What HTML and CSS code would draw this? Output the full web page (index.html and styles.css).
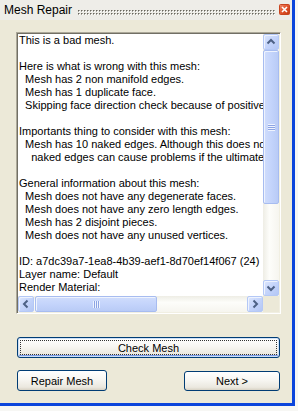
FILE: index.html
```html
<!DOCTYPE html>
<html lang="en">
<head>
    <meta charset="UTF-8">
    <title>Mesh Repair</title>
    <link rel="stylesheet" href="styles.css">
</head>
<body>
<div class="win">
    <div class="title">
        <span class="title-text">Mesh Repair</span>
        <svg class="grip" height="6">
            <defs>
                <pattern id="dots" width="3" height="3" patternUnits="userSpaceOnUse">
                    <rect x="0" y="0" width="2" height="2" fill="#a9a79e"/>
                    <rect x="0" y="0" width="1" height="1" fill="#66645d"/>
                    <rect x="1" y="1" width="1" height="1" fill="#ffffff"/>
                </pattern>
            </defs>
            <rect width="100%" height="6" fill="url(#dots)"/>
        </svg>
        <span class="close">
            <svg width="11" height="11" viewBox="0 0 11 11">
                <defs>
                    <linearGradient id="red" x1="0" y1="0" x2="1" y2="1">
                        <stop offset="0" stop-color="#f08c6c"/>
                        <stop offset="0.5" stop-color="#e0532c"/>
                        <stop offset="1" stop-color="#c23812"/>
                    </linearGradient>
                </defs>
                <rect x="0.5" y="0.5" width="10" height="10" rx="1" fill="url(#red)" stroke="#c8441f"/>
                <path d="M3 3 L8 8 M8 3 L3 8" stroke="#fff" stroke-width="1.6"/>
            </svg>
        </span>
    </div><!--title end-->

    <div class="content">
        <div class="textbox">
            <div class="text">This is a bad mesh.

Here is what is wrong with this mesh:
  Mesh has 2 non manifold edges.
  Mesh has 1 duplicate face.
  Skipping face direction check because of positive or negative volume errors.

Importants thing to consider with this mesh:
  Mesh has 10 naked edges. Although this does not
    naked edges can cause problems if the ultimate goal is to output the mesh.

General information about this mesh:
  Mesh does not have any degenerate faces.
  Mesh does not have any zero length edges.
  Mesh has 2 disjoint pieces.
  Mesh does not have any unused vertices.

ID: a7dc39a7-1ea8-4b39-aef1-8d70ef14f067 (24)
Layer name: Default
Render Material:
    source = from layer</div>

            <div class="vscroll">
                <span class="sb-btn">
                    <svg width="14" height="14" viewBox="0 0 14 14"><path d="M3.5 8.5 L7 5 L10.5 8.5" fill="none" stroke="#4d6185" stroke-width="2"/></svg>
                </span>
                <span class="v-thumb"><i class="grip-v"></i></span>
                <span class="v-track"></span>
                <span class="sb-btn">
                    <svg width="14" height="14" viewBox="0 0 14 14"><path d="M3.5 5.5 L7 9 L10.5 5.5" fill="none" stroke="#4d6185" stroke-width="2"/></svg>
                </span>
            </div>

            <div class="hscroll">
                <span class="sb-btn">
                    <svg width="14" height="14" viewBox="0 0 14 14"><path d="M8.5 3.5 L5 7 L8.5 10.5" fill="none" stroke="#4d6185" stroke-width="2"/></svg>
                </span>
                <span class="h-thumb"><i class="grip-h"></i></span>
                <span class="h-track"></span>
                <span class="sb-btn">
                    <svg width="14" height="14" viewBox="0 0 14 14"><path d="M5.5 3.5 L9 7 L5.5 10.5" fill="none" stroke="#4d6185" stroke-width="2"/></svg>
                </span>
            </div>

            <div class="corner"></div>
        </div><!--textbox end-->

        <button class="btn btn-default">Check Mesh</button>

        <div class="row">
            <button class="btn repair">Repair Mesh</button>
            <button class="btn next">Next &gt;</button>
        </div>
    </div><!--content end-->
</div><!--win end-->
</body>
</html>
```

FILE: styles.css
```css
*{
    margin: 0;
    padding: 0;
    box-sizing: border-box;
}
body{
    background-color: #f7f7f4;
    font-family: "Liberation Sans", Arial, sans-serif;
    font-size: 11px;
    color: #000;
}
.win{
    width: 295px;
    height: 406px;
    background-color: #ece9d8;
    border-right: 3px solid #0b45dc;
    border-bottom: 3px solid #0b45dc;
}

/* title bar */
.title{
    display: flex;
    align-items: center;
    height: 20px;
    padding: 0 2px 0 4px;
    background-color: #eeede8;
}
.title-text{
    font-size: 12px;
    line-height: 20px;
    white-space: nowrap;
}
.grip{
    flex: 1;
    margin: 6px 3px 0 6px;
}
.close{
    width: 11px;
    height: 11px;
    display: block;
    margin-top: -1px;
}
.close svg{
    display: block;
}

.content{
    padding: 12px 11px 0 16px;
}

/* sunken text box */
.textbox{
    width: 265px;
    height: 282px;
    display: grid;
    grid-template-columns: 1fr 16px;
    grid-template-rows: 1fr 16px;
    background-color: #fff;
    border: 1px solid;
    border-color: #aca899 #fff #fff #aca899;
    box-shadow: inset 1px 1px 0 #716f64, inset -1px -1px 0 #f1efe2;
    padding: 1px;
}
.text{
    overflow: hidden;
    white-space: pre;
    line-height: 13px;
    padding: 0 0 0 1px;
}

/* scroll bars */
.vscroll{
    display: flex;
    flex-direction: column;
    background: linear-gradient(to right, #eeede5, #fdfdfa 40%, #f6f5ef);
}
.hscroll{
    display: flex;
    background: linear-gradient(to bottom, #eeede5, #fdfdfa 40%, #f6f5ef);
}
.corner{
    background-color: #ece9d8;
}
.sb-btn{
    width: 16px;
    height: 16px;
    flex: none;
    display: flex;
    align-items: center;
    justify-content: center;
    border: 1px solid #b4c8f6;
    border-radius: 2px;
    background: linear-gradient(135deg, #dce6fd, #c4d4fb 50%, #b4c7f4);
    box-shadow: inset 1px 1px 0 #eef3fe;
}
.sb-btn svg{
    display: block;
}
.v-thumb{
    height: 154px;
    flex: none;
    display: flex;
    align-items: center;
    justify-content: center;
    border: 1px solid #a7bcf0;
    border-radius: 2px;
    background: linear-gradient(to right, #d0ddfc, #c4d4fb 50%, #b9cbf6);
    box-shadow: inset 1px 1px 0 #eef3fe;
}
.v-track, .h-track{
    flex: 1;
}
.grip-v{
    display: block;
    width: 7px;
    height: 7px;
    background: repeating-linear-gradient(to bottom, #eef3fe 0, #eef3fe 1px, #8ca4e4 1px, #8ca4e4 2px);
}
.h-thumb{
    width: 122px;
    flex: none;
    margin-left: 1px;
    display: flex;
    align-items: center;
    justify-content: center;
    border: 1px solid #a7bcf0;
    border-radius: 2px;
    background: linear-gradient(to bottom, #d0ddfc, #c4d4fb 50%, #b9cbf6);
    box-shadow: inset 1px 1px 0 #eef3fe;
}
.grip-h{
    display: block;
    width: 7px;
    height: 7px;
    background: repeating-linear-gradient(to right, #eef3fe 0, #eef3fe 1px, #8ca4e4 1px, #8ca4e4 2px);
}

/* buttons */
.btn{
    display: block;
    height: 21px;
    font-family: "Liberation Sans", Arial, sans-serif;
    font-size: 11px;
    color: #000;
    border: 1px solid #003c74;
    border-radius: 3px;
    background: linear-gradient(to bottom, #ffffff 0%, #f7f6f2 45%, #ebe8df 85%, #d8d2c4 100%);
    position: relative;
}
.btn-default{
    width: 263px;
    margin: 23px 0 0 1px;
    box-shadow: inset 0 0 0 1px #cde0f8, inset 0 -1px 0 1px #7a9ae8;
}
.btn-default::after{
    content: "";
    position: absolute;
    left: 2px;
    top: 2px;
    right: 2px;
    bottom: 2px;
    border: 1px dotted #333;
}
.row{
    display: flex;
    justify-content: space-between;
    margin: 12px 0 0 1px;
    width: 263px;
}
.repair{
    width: 90px;
}
.next{
    width: 96px;
    height: 20px;
    margin-top: 1px;
}
```
